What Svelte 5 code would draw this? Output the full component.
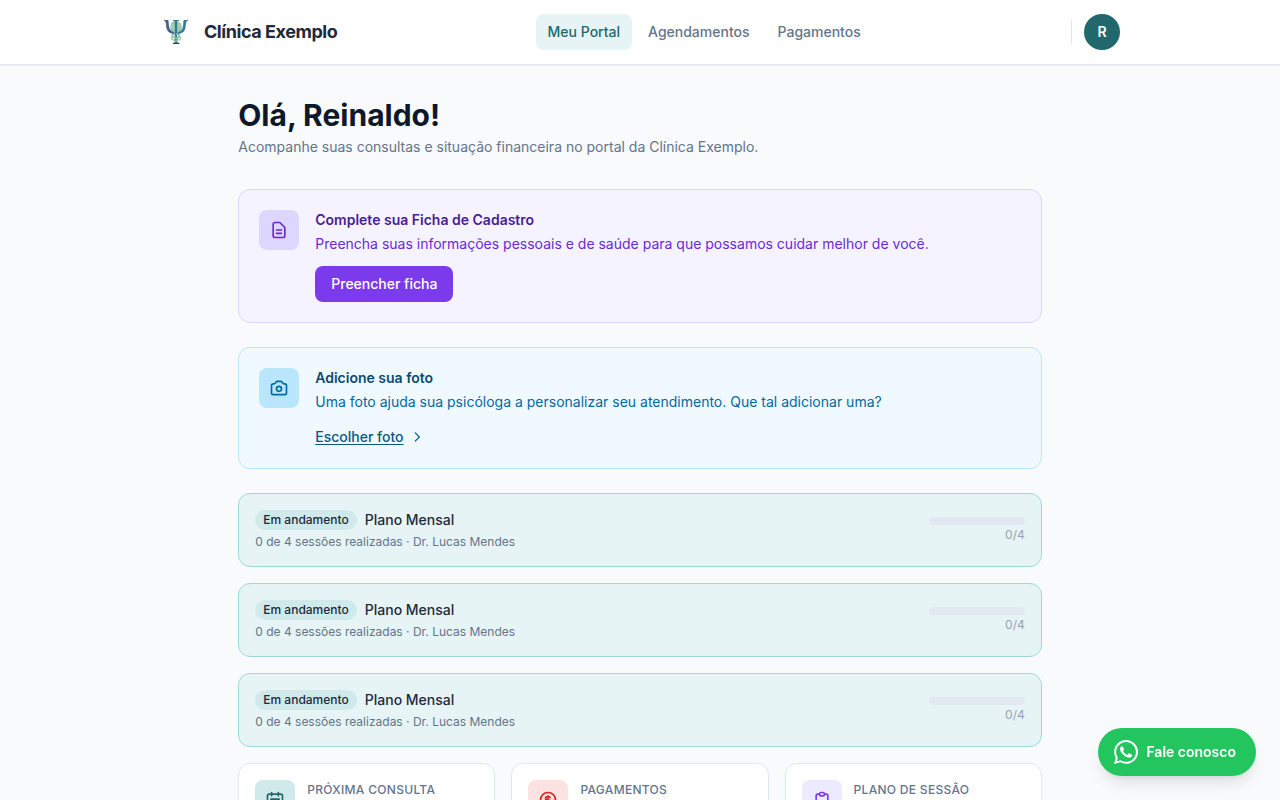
<script>
  const nav = [
    { label: 'Meu Portal', active: true },
    { label: 'Agendamentos', active: false },
    { label: 'Pagamentos', active: false },
  ];
  const plans = [0, 0, 0];
  const total = 4;
  const cards = [
    {
      title: 'Próxima consulta',
      tone: 'teal',
      icon: 'M8 7V3m8 4V3m-9 8h10M5 21h14a2 2 0 002-2V7a2 2 0 00-2-2H5a2 2 0 00-2 2v12a2 2 0 002 2z',
    },
    {
      title: 'Pagamentos',
      tone: 'red',
      icon: 'M12 8c-1.657 0-3 .895-3 2s1.343 2 3 2 3 .895 3 2-1.343 2-3 2m0-8c1.11 0 2.08.402 2.599 1M12 8V7m0 1v8m0 0v1m0-1c-1.11 0-2.08-.402-2.599-1M21 12a9 9 0 11-18 0 9 9 0 0118 0z',
    },
    {
      title: 'Plano de sessão',
      tone: 'violet',
      icon: 'M9 5H7a2 2 0 00-2 2v12a2 2 0 002 2h10a2 2 0 002-2V7a2 2 0 00-2-2h-2M9 5a2 2 0 002 2h2a2 2 0 002-2M9 5a2 2 0 012-2h2a2 2 0 012 2',
    },
  ];
</script>

{#snippet lineIcon(d, size = 20)}
  <svg width={size} height={size} viewBox="0 0 24 24" fill="none" stroke="currentColor" stroke-width="2" stroke-linecap="round" stroke-linejoin="round"><path {d} /></svg>
{/snippet}

<div class="page">
  <header>
    <div class="bar">
      <div class="brand">
        <svg width="24" height="24" viewBox="0 0 24 24" fill="none">
          <circle cx="12" cy="6.8" r="5.9" fill="#a0cfb1" />
          <path d="M7.2 3.8c2-1.8 3.6-2 4.8-2M7 8.8c1.4 1.6 2.6 2.2 4.3 2.2M14 10.8c1.8-.7 2.8-2 3.2-3.5" stroke="#82bf9f" stroke-width="1" />
          <path d="M0 0h4.4v.9c.6 2.8.2 5.3 1.3 7.7.8 1.8 2.5 3.2 5 3.9v1.9C7 14 4.2 12.4 3 9.6 1.9 6.9 2.5 3 1.2 1.1L0 .8z" fill="#3f658b" />
          <path d="M24 0h-4.4v.9c-.6 2.8-.2 5.3-1.3 7.7-.8 1.8-2.5 3.2-5 3.9v1.9c3.7-.4 6.5-2 7.7-4.8 1.1-2.7.5-6.6 1.8-8.5L24 .8z" fill="#377c9f" />
          <path d="M1.8 1.2c1 2.8.4 5.6 1.5 8.1.7 1.6 1.8 2.8 3.4 3.7" stroke="#80557f" stroke-width=".6" />
          <path d="M9 .5h6" stroke="#3f7f94" stroke-width="1" />
          <path d="M12 .5v22.5" stroke="#387a91" stroke-width="2.4" />
          <path d="M8.4 24c.3-1 1.2-1 2.2-1.5h3c1 .5 2 .5 2.3 1.5z" fill="#284b63" />
          <path d="M11 13.5c-4 1.3-3.6 3.3.4 4.3 3.5.9 2.7 3.2-.9 3.8M12 14c4.3.6 4.7 3 .8 4.1-3.7 1.2-3.3 2.7-.2 3.2" stroke="#80bda1" stroke-width="1.6" />
          <path d="M8.6 15.5l-1.1 3 2 2M15.5 16l1.2 2-1.7 2.2" stroke="#9bcbb2" stroke-width="1.4" />
        </svg>
        <span>Clínica Exemplo</span>
      </div>
      <nav>
        {#each nav as item}
          <a href="#top" class:active={item.active}>{item.label}</a>
        {/each}
      </nav>
      <div class="user">
        <div class="divider"></div>
        <div class="avatar">R</div>
      </div>
    </div>
  </header>

  <main>
    <div class="intro">
      <h1>Olá, Reinaldo!</h1>
      <p>Acompanhe suas consultas e situação financeira no portal da Clínica Exemplo.</p>
    </div>

    <section class="notice form">
      <div class="tile">
        {@render lineIcon('M9 12h6m-6 4h6m2 5H7a2 2 0 01-2-2V5a2 2 0 012-2h5.586a1 1 0 01.707.293l5.414 5.414a1 1 0 01.293.707V19a2 2 0 01-2 2z')}
      </div>
      <div class="body">
        <h2>Complete sua Ficha de Cadastro</h2>
        <p>Preencha suas informações pessoais e de saúde para que possamos cuidar melhor de você.</p>
        <button>Preencher ficha</button>
      </div>
    </section>

    <section class="notice photo">
      <div class="tile">
        {@render lineIcon('M3 9a2 2 0 012-2h.93a2 2 0 001.664-.89l.812-1.22A2 2 0 0110.07 4h3.86a2 2 0 011.664.89l.812 1.22A2 2 0 0018.07 7H19a2 2 0 012 2v9a2 2 0 01-2 2H5a2 2 0 01-2-2V9zM15 13a3 3 0 11-6 0 3 3 0 016 0z')}
      </div>
      <div class="body">
        <h2>Adicione sua foto</h2>
        <p>Uma foto ajuda sua psicóloga a personalizar seu atendimento. Que tal adicionar uma?</p>
        <a class="choose" href="#foto"><span>Escolher foto</span>{@render lineIcon('M9 5l7 7-7 7', 14)}</a>
      </div>
    </section>

    <div class="plans">
      {#each plans as done}
        <section class="plan">
          <div>
            <div class="heading"><span class="badge">Em andamento</span><strong>Plano Mensal</strong></div>
            <p>{done} de {total} sessões realizadas · Dr. Lucas Mendes</p>
          </div>
          <div class="progress">
            <div class="track"><div class="fill" style="width: {(done / total) * 100}%"></div></div>
            <span>{done}/{total}</span>
          </div>
        </section>
      {/each}
    </div>

    <div class="cards">
      {#each cards as card}
        <section class="card">
          <div class="tile {card.tone}">{@render lineIcon(card.icon)}</div>
          <h3>{card.title}</h3>
        </section>
      {/each}
    </div>
  </main>

  <a class="whatsapp" href="#contato">
    <svg width="24" height="24" viewBox="0 0 24 24" fill="currentColor"><path d="M17.472 14.382c-.297-.149-1.758-.867-2.03-.967-.273-.099-.471-.148-.67.15-.197.297-.767.966-.94 1.164-.173.199-.347.223-.644.075-.297-.15-1.255-.463-2.39-1.475-.883-.788-1.48-1.761-1.653-2.059-.173-.297-.018-.458.13-.606.134-.133.298-.347.446-.52.149-.174.198-.298.298-.497.099-.198.05-.371-.025-.52-.075-.149-.669-1.612-.916-2.207-.242-.579-.487-.5-.669-.51-.173-.008-.371-.01-.57-.01-.198 0-.52.074-.792.372-.272.297-1.04 1.016-1.04 2.479 0 1.462 1.065 2.875 1.213 3.074.149.198 2.096 3.2 5.077 4.487.709.306 1.262.489 1.694.625.712.227 1.36.195 1.871.118.571-.085 1.758-.719 2.006-1.413.248-.694.248-1.289.173-1.413-.074-.124-.272-.198-.57-.347m-5.421 7.403h-.004a9.87 9.87 0 01-5.031-1.378l-.361-.214-3.741.982.998-3.648-.235-.374a9.86 9.86 0 01-1.51-5.26c.001-5.45 4.436-9.884 9.888-9.884 2.64 0 5.122 1.03 6.988 2.898a9.825 9.825 0 012.893 6.994c-.003 5.45-4.437 9.884-9.885 9.884m8.413-18.297A11.815 11.815 0 0012.05 0C5.495 0 .16 5.335.157 11.892c0 2.096.547 4.142 1.588 5.945L.057 24l6.305-1.654a11.882 11.882 0 005.683 1.448h.005c6.554 0 11.89-5.335 11.893-11.893a11.821 11.821 0 00-3.48-8.413z" /></svg>
    <span>Fale conosco</span>
  </a>
</div>

<style>
  :global(body) { margin: 0; background: #f8fafc; }
  .page {
    height: 800px;
    overflow: hidden;
    background: #f8fafc;
    font: 14px/20px Inter, sans-serif;
    color: #1e293b;
  }
  * { box-sizing: border-box; }
  h1, h2, h3, p { margin: 0; }
  a { color: inherit; text-decoration: none; }
  svg { display: block; flex: none; }
  header {
    height: 65px;
    background: #fff;
    border-bottom: 1px solid #e2e8f0;
    box-shadow: 0 1px 2px rgba(0, 0, 0, 0.05);
  }
  .bar {
    width: 960px;
    height: 64px;
    margin: 0 auto;
    display: flex;
    justify-content: space-between;
    align-items: center;
  }
  .brand {
    display: flex;
    align-items: center;
    gap: 16px;
    padding-left: 4px;
    font-size: 18px;
    line-height: 28px;
    font-weight: 700;
    letter-spacing: -0.025em;
  }
  nav { display: flex; gap: 4px; }
  nav a { padding: 8px 12px; border-radius: 8px; font-weight: 500; color: #64748b; }
  nav a.active { background: #e6f4f5; color: #21686d; }
  .user { display: flex; align-items: center; gap: 12px; }
  .divider { width: 1px; height: 24px; background: #e2e8f0; }
  .avatar {
    width: 36px;
    height: 36px;
    border-radius: 50%;
    background: #21686d;
    color: #fff;
    font-weight: 600;
    display: grid;
    place-items: center;
  }
  main { width: 803.5px; margin: 0 auto; padding-top: 32px; }
  .intro { margin-bottom: 32px; }
  h1 { font-size: 30px; line-height: 36px; font-weight: 700; color: #0f172a; }
  .intro p { margin-top: 4px; color: #64748b; }
  .notice {
    display: flex;
    gap: 16px;
    padding: 20px;
    border: 1px solid;
    border-radius: 12px;
    margin-bottom: 24px;
  }
  .tile {
    width: 40px;
    height: 40px;
    flex: none;
    border-radius: 8px;
    display: grid;
    place-items: center;
  }
  h2 { font-size: 14px; line-height: 20px; font-weight: 600; }
  .notice p { margin-top: 4px; }
  .form { background: #f5f3ff; border-color: #ddd6fe; color: #6d28d9; }
  .form .tile { background: #ddd6fe; }
  .form h2 { color: #4c1d95; }
  button {
    display: block;
    margin-top: 12px;
    padding: 8px 16px;
    border: 0;
    border-radius: 8px;
    background: #7c3aed;
    color: #fff;
    font: inherit;
    font-weight: 500;
  }
  .photo { background: #f0f9ff; border-color: #bae6fd; color: #0369a1; }
  .photo .tile { background: #bae6fd; }
  .photo h2 { color: #0c4a6e; }
  .choose {
    display: flex;
    align-items: center;
    gap: 6px;
    margin-top: 14px;
    height: 22px;
    color: #075985;
    font-weight: 500;
  }
  .choose span { text-decoration: underline; text-underline-offset: 2px; }
  .plans { display: grid; gap: 16px; }
  .plan {
    height: 74px;
    padding: 16px;
    border: 1px solid #9ed8da;
    border-radius: 12px;
    background: #e6f4f5;
    display: flex;
    justify-content: space-between;
  }
  .heading { display: flex; align-items: center; gap: 8px; }
  .heading strong { font-weight: 500; }
  .badge {
    padding: 2px 8px;
    border-radius: 10px;
    background: #d0eaeb;
    font-size: 12px;
    line-height: 16px;
    font-weight: 500;
  }
  .plan p { margin-top: 4px; font-size: 12px; line-height: 16px; color: #64748b; }
  .progress {
    width: 96px;
    padding-top: 7px;
    text-align: right;
    font-size: 12px;
    line-height: 16px;
    color: #94a3b8;
  }
  .track { height: 8px; border-radius: 4px; background: #e2e8f0; margin-bottom: 2px; }
  .fill { height: 8px; border-radius: 4px; background: #21686d; }
  .progress span { display: block; }
  .cards { display: grid; grid-template-columns: repeat(3, 1fr); gap: 16px; margin-top: 16px; }
  .card {
    height: 120px;
    padding: 16px;
    display: flex;
    gap: 12px;
    background: #fff;
    border: 1px solid #e2e8f0;
    border-radius: 12px;
    box-shadow: 0 1px 2px rgba(0, 0, 0, 0.05);
  }
  h3 {
    margin-top: 2px;
    font-size: 12px;
    line-height: 16px;
    font-weight: 500;
    letter-spacing: 0.025em;
    text-transform: uppercase;
    color: #64748b;
  }
  .teal { background: #d0eaeb; color: #21686d; }
  .red { background: #fee2e2; color: #dc2626; }
  .violet { background: #ede9fe; color: #7c3aed; }
  .whatsapp {
    position: fixed;
    right: 24px;
    bottom: 24px;
    height: 48px;
    padding: 0 20px 0 16px;
    display: flex;
    align-items: center;
    gap: 8px;
    border-radius: 24px;
    background: #22c55e;
    color: #fff;
    font-weight: 600;
    box-shadow: 0 10px 15px -3px rgba(0, 0, 0, 0.1), 0 4px 6px -4px rgba(0, 0, 0, 0.1);
  }
</style>
